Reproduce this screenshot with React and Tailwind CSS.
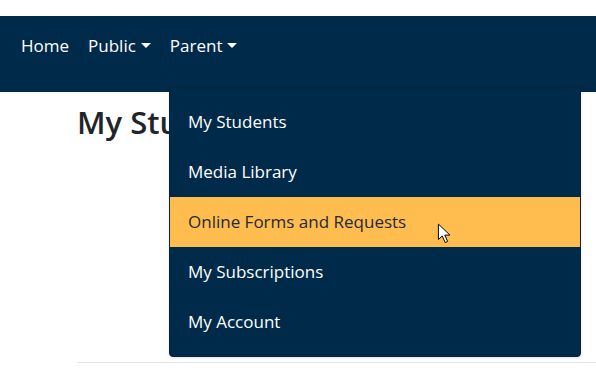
import React from 'react';

const items = [
    { label: 'My Students' },
    { label: 'Media Library' },
    { label: 'Online Forms and Requests', active: true },
    { label: 'My Subscriptions' },
    { label: 'My Account' },
];

const Caret = () => (
    <span className="ml-[5px] inline-block w-0 h-0 border-x-[5px] border-x-transparent border-t-[5px] border-t-white relative top-[-1px]" />
);

const Cursor = () => (
    <svg width="16" height="22" viewBox="0 0 14 20" className="absolute left-[267px] top-[26px]">
        <path d="M1 1 L1 15 L4.5 11.8 L7.2 17.8 L9.4 16.8 L6.8 11 L11.5 11 Z" fill="#fff" stroke="#000" strokeWidth="0.9" strokeLinejoin="round" />
    </svg>
);

export default function App() {
    return (
        <div className="relative w-[596px] h-[380px] bg-white overflow-hidden" style={{ fontFamily: '"Open Sans", "Noto Sans", sans-serif' }}>
            <div className="h-4" />
            <nav className="h-[76px] bg-[#002a4a] flex items-start pt-[18px] px-[21px] gap-[19px] text-white text-[17px] leading-[24px]">
                <a>Home</a>
                <a className="flex items-center">Public<Caret /></a>
                <a className="flex items-center">Parent<Caret /></a>
            </nav>
            <main className="ml-[77px]">
                <h1 className="text-[31px] font-semibold text-[#212529] mt-[8px] leading-[44px]">My Students</h1>
                <div className="h-[218px]" />
                <hr className="border-t border-[#e3e3e3]" />
            </main>

            <div className="absolute left-[169px] top-[87px] w-[412px] bg-[#002a4a] border border-[#0b2238] rounded-b-[4px] py-[9px] shadow-sm">
                {items.map((it) => (
                    <div
                        key={it.label}
                        className={`relative h-[50px] flex items-center pl-[18px] text-[17px] ${it.active ? 'bg-[#ffbd50] text-[#1f2a33]' : 'text-white'}`}
                    >
                        {it.label}
                        {it.active && <Cursor />}
                    </div>
                ))}
            </div>
        </div>
    );
}
